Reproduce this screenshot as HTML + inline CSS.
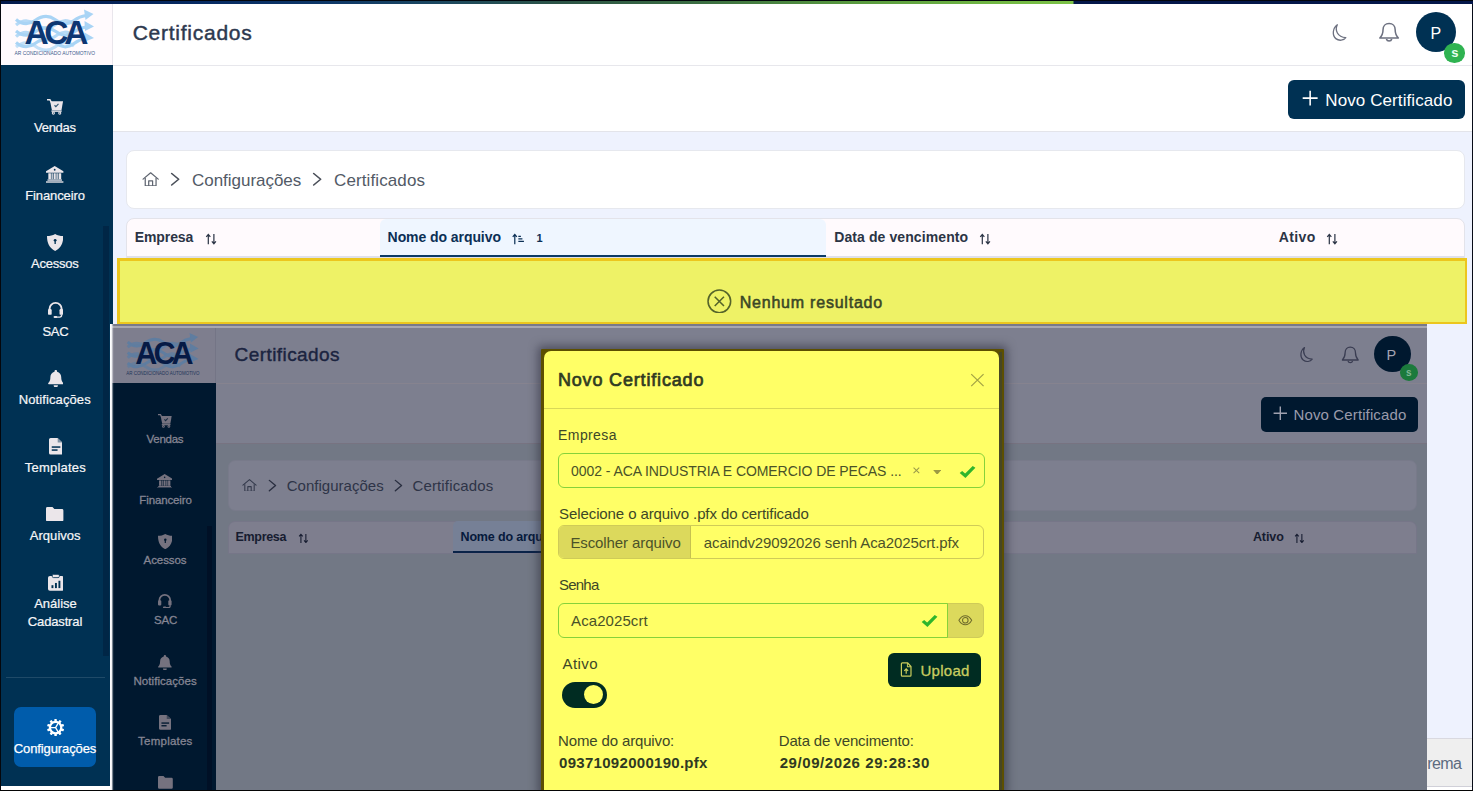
<!DOCTYPE html>
<html lang="pt-BR"><head><meta charset="utf-8"><title>Certificados</title>
<style>html,body{margin:0;padding:0}html{overflow:hidden}body{width:1473px;height:791px;position:relative;overflow:hidden;background:#fff;font-family:"Liberation Sans", sans-serif;}.g{display:contents;margin:0}div,svg,span.t{position:absolute;display:block}.t{white-space:pre;margin:0;padding:0}svg{overflow:hidden}</style></head>
<body>
<header class="g">
<div style="left:113px;top:4px;width:1359px;height:61px;background:#fff;border-bottom:1px solid #e7e7ec;"></div>
<div style="left:113px;top:66px;width:1359px;height:65px;background:#fff;border-bottom:1px solid #e3e4ea;"></div>
<span class="t" id="t0" style="left:132.70px;top:21.60px;font-size:21px;line-height:21px;font-weight:400;color:#2d394f;letter-spacing:0.748px;-webkit-text-stroke:0.45px #2d394f;">Certificados</span>
<svg style="left:1329px;top:21.5px;" width="21" height="21" viewBox="0 0 24 24" preserveAspectRatio="none"><path d="M9.500 3.200C6.500 9 9.500 17.500 19.200 17.800 16.800 21.200 11.500 22 7.800 19 3.500 15.500 4 7 9.500 3.200z" fill="none" stroke="#6d7180" stroke-width="1.500" stroke-linejoin="round"/></svg>
<svg style="left:1376.6px;top:21.0px;" width="24.2" height="23.4" viewBox="0 0 24 24" preserveAspectRatio="none"><path d="M12 2.500c-3.700 0-6 2.800-6 6.300 0 4.200-1 6.400-3.200 8.700h18.400C19 15.200 18 13 18 8.800c0-3.500-2.300-6.300-6-6.300z" fill="none" stroke="#6d7180" stroke-width="1.500" stroke-linejoin="round"/><path d="M9.300 18.500a2.800 2.800 0 0 0 5.400 0" fill="none" stroke="#6d7180" stroke-width="1.500"/></svg>
<div style="left:1415.7px;top:11.8px;width:40.6px;height:40.6px;background:#003153;border-radius:50%;"></div>
<span class="t" id="t1" style="left:1430.50px;top:25.70px;font-size:16px;line-height:16px;font-weight:400;color:#fff;letter-spacing:1.300px;">P</span>
<div style="left:1444.3px;top:43.3px;width:20.6px;height:19.4px;background:#2fb351;border-radius:50%;"></div>
<span class="t" id="t2" style="left:1451.20px;top:46.40px;font-size:13px;line-height:13px;font-weight:700;color:#e8fff0;letter-spacing:0.000px;">s</span>
<div style="left:1288px;top:80px;width:177px;height:39.2px;background:#003153;border-radius:6px;"></div>
<svg style="left:1301.7px;top:90.2px;" width="16.3" height="16.3" viewBox="0 0 24 24" preserveAspectRatio="none"><path d="M12 1v22M1 12h22" fill="none" stroke="#fff" stroke-width="2.3"/></svg>
<span class="t" id="t3" style="left:1325.30px;top:91.60px;font-size:17px;line-height:17px;font-weight:400;color:#fff;letter-spacing:0.093px;">Novo Certificado</span>
</header>
<aside class="g">
<div style="left:1px;top:4px;width:112px;height:61px;background:#fffafd;border-right:1px solid #e9e6ec;box-sizing:border-box;"></div>
<svg style="left:1px;top:4px;" width="112" height="61" viewBox="0 0 112 61" preserveAspectRatio="none"><g fill="none" stroke="#a9d4f5" stroke-width="3.200" stroke-linecap="butt"><path d="M15 15.5c6 5 12 6 19 1s13-6 20-1 12 6 19 1c4-3 8-4.500 12-5" opacity="1"/><path d="M15 27c6 5 12 6 19 1s13-6 20-1 12 6 19 1c4-3 8-4.500 12-5" opacity="1"/><path d="M15 38.5c6 5 12 6 19 1s13-6 20-1 12 6 19 1c4-3 8-4.500 12-5" opacity="1"/><path d="M15 21c6-5 12-6 19-1s13 6 20 1 12-6 19-1" opacity="0.85"/><path d="M15 32.5c6-5 12-6 19-1s13 6 20 1 12-6 19-1" opacity="0.85"/><path d="M15 43c6-5 12-6 19-1s13 6 20 1 12-6 19-1" opacity="0.7"/></g><g fill="#a9d4f5"><path d="M83 5.500l9.500 4.500-8 6z"/><path d="M83.500 17l9.500 5.500-9 4.500z"/><path d="M83.500 28.500l9.500 5.500-10 4z"/></g><text x="53.300" y="39.700" text-anchor="middle" font-family='"Liberation Sans", sans-serif' font-weight="700" font-size="33.500" letter-spacing="-4.300" fill="#0d3672">ACA</text><text x="13.500" y="51.200" font-family='"Liberation Sans", sans-serif' font-weight="400" font-size="5.400" fill="#3b5a8c" textLength="80.500" lengthAdjust="spacingAndGlyphs">AR CONDICIONADO AUTOMOTIVO</text></svg>
<div style="left:1px;top:65px;width:112px;height:721px;background:#003153;"></div>
<div style="left:103px;top:226px;width:6px;height:430px;background:#002646;"></div>
<div style="left:6px;top:677px;width:98.5px;height:1px;background:#1f4a68;"></div>
<svg style="left:46.9px;top:99.0px;" width="16.2" height="15.8" viewBox="0 1 23.700 22.400" preserveAspectRatio="none"><path d="M.8 2h3.400l1.800 3" fill="none" stroke="#ebe6ea" stroke-width="2.200" stroke-linecap="round" stroke-linejoin="round"/><path d="M4.600 4.200h18.900l-2.300 12.600H7.200z" fill="#ebe6ea"/><path d="M11 9.800l2 2 3.800-3.800" fill="none" stroke="#003153" stroke-width="1.700" opacity=".8"/><rect x="6.500" y="17.200" width="15" height="2" fill="#ebe6ea"/><circle cx="9.300" cy="21" r="2.300" fill="#ebe6ea"/><circle cx="18.700" cy="21" r="2.300" fill="#ebe6ea"/><circle cx="9.300" cy="21" r=".8" fill="#003153"/><circle cx="18.700" cy="21" r=".8" fill="#003153"/></svg>
<span class="t" id="t4" style="left:34.00px;top:121.20px;font-size:13px;line-height:13px;font-weight:400;color:#f6f6f8;letter-spacing:-0.275px;-webkit-text-stroke:0.22px #f6f6f8;">Vendas</span>
<svg style="left:46.4px;top:165.9px;" width="17.4" height="16.7" viewBox="0.500 1.200 23 22.100" preserveAspectRatio="none"><path d="M12 1.200L23.500 8.200v2H.5v-2z" fill="#ebe6ea"/><circle cx="12" cy="6.200" r="1.200" fill="#003153"/><rect x="3.600" y="10.800" width="3.400" height="8" fill="#ebe6ea"/><rect x="7.600" y="10.800" width="2.600" height="8" fill="#ebe6ea" opacity=".8"/><rect x="10.800" y="10.800" width="2.600" height="8" fill="#ebe6ea"/><rect x="14" y="10.800" width="2.600" height="8" fill="#ebe6ea" opacity=".8"/><rect x="17.200" y="10.800" width="3.400" height="8" fill="#ebe6ea"/><rect x="2.400" y="19" width="19.200" height="1.700" fill="#ebe6ea"/><rect x=".5" y="21.500" width="23" height="1.800" fill="#ebe6ea"/></svg>
<span class="t" id="t5" style="left:25.20px;top:189.20px;font-size:13px;line-height:13px;font-weight:400;color:#f6f6f8;letter-spacing:-0.107px;-webkit-text-stroke:0.22px #f6f6f8;">Financeiro</span>
<svg style="left:46.9px;top:234.4px;" width="16.3" height="16.9" viewBox="2 1.200 20 21.600" preserveAspectRatio="none"><path d="M12 1.2c3 1.8 6.5 2.6 10 2.6 0 9-2.8 15.5-10 19-7.2-3.500-10-10-10-19 3.500 0 7-.8 10-2.600z" fill="#ebe6ea"/><circle cx="12" cy="9.2" r="1.7" fill="#003153"/><rect x="11.2" y="9.5" width="1.6" height="4.5" fill="#003153"/></svg>
<span class="t" id="t6" style="left:31.00px;top:257.20px;font-size:13px;line-height:13px;font-weight:400;color:#f6f6f8;letter-spacing:-0.222px;-webkit-text-stroke:0.22px #f6f6f8;">Acessos</span>
<svg style="left:47.7px;top:301.7px;" width="15.2" height="16.0" viewBox="2.500 2.300 19 20.900" preserveAspectRatio="none"><path d="M4.500 14V11a7.500 7.500 0 0 1 15 0v3" fill="none" stroke="#ebe6ea" stroke-width="2.400"/><rect x="2.500" y="11.5" width="4.600" height="7.600" rx="1.6" fill="#ebe6ea"/><rect x="16.9" y="11.5" width="4.600" height="7.600" rx="1.6" fill="#ebe6ea"/><path d="M19.5 18.500v1.2a2.300 2.300 0 0 1-2.300 2.300H12" fill="none" stroke="#ebe6ea" stroke-width="1.800"/><rect x="9.500" y="20.6" width="4.500" height="2.600" rx="1.2" fill="#ebe6ea"/></svg>
<span class="t" id="t7" style="left:42.50px;top:325.20px;font-size:13px;line-height:13px;font-weight:400;color:#f6f6f8;letter-spacing:-0.321px;-webkit-text-stroke:0.22px #f6f6f8;">SAC</span>
<svg style="left:47.6px;top:369.8px;" width="15.6" height="17.4" viewBox="2.200 1.200 19.600 22.300" preserveAspectRatio="none"><path d="M12 1.2c.9 0 1.600.7 1.600 1.600v.5c3.200.8 5.200 3.500 5.200 6.900 0 4.300 1.100 6.100 2.600 7.600.5.500.2 1.600-.6 1.600H3.200c-.8 0-1.100-1.100-.6-1.600C4.100 16.300 5.200 14.500 5.200 10.200c0-3.400 2-6.100 5.200-6.900v-.5c0-.9.700-1.600 1.600-1.600z" fill="#ebe6ea"/><path d="M9.300 20.800h5.400a2.700 2.700 0 0 1-5.400 0z" fill="#ebe6ea"/></svg>
<span class="t" id="t8" style="left:18.80px;top:393.20px;font-size:13px;line-height:13px;font-weight:400;color:#f6f6f8;letter-spacing:0.099px;-webkit-text-stroke:0.22px #f6f6f8;">Notificações</span>
<svg style="left:48.5px;top:438.2px;" width="13.7" height="16.6" viewBox="3.500 1 16.500 22" preserveAspectRatio="none"><path d="M5.500 1h8.500l6 6v14a2 2 0 0 1-2 2H5.500a2 2 0 0 1-2-2V3a2 2 0 0 1 2-2z" fill="#ebe6ea"/><path d="M14 1v6h6z" fill="#003153" opacity=".45"/><rect x="6.800" y="12" width="10.400" height="2" fill="#003153"/><rect x="6.800" y="16" width="7" height="2" fill="#003153"/></svg>
<span class="t" id="t9" style="left:24.80px;top:461.20px;font-size:13px;line-height:13px;font-weight:400;color:#f6f6f8;letter-spacing:0.219px;-webkit-text-stroke:0.22px #f6f6f8;">Templates</span>
<svg style="left:46.4px;top:506.6px;" width="17.4" height="14.4" viewBox="1 3 22 18" preserveAspectRatio="none"><path d="M2.800 3h6.400l2.400 2.600h9.600A1.800 1.800 0 0 1 23 7.400V19.200A1.800 1.800 0 0 1 21.200 21H2.800A1.800 1.800 0 0 1 1 19.200V4.800A1.800 1.800 0 0 1 2.800 3z" fill="#ebe6ea"/></svg>
<span class="t" id="t10" style="left:29.80px;top:529.20px;font-size:13px;line-height:13px;font-weight:400;color:#f6f6f8;letter-spacing:0.032px;-webkit-text-stroke:0.22px #f6f6f8;">Arquivos</span>
<svg style="left:47.5px;top:574.0px;" width="15.7" height="16.7" viewBox="3 .3 18 22.700" preserveAspectRatio="none"><rect x="3" y="3" width="18" height="20" rx="2.200" fill="#ebe6ea"/><rect x="8" y=".8" width="8" height="4.400" rx="1.400" fill="#ebe6ea" stroke="#003153" stroke-width="1"/><rect x="7" y="15.500" width="2.200" height="4" fill="#003153"/><rect x="11" y="12.500" width="2.200" height="7" fill="#003153"/><rect x="15" y="9.500" width="2.200" height="10" fill="#003153"/></svg>
<span class="t" id="t11" style="left:34.20px;top:597.20px;font-size:13px;line-height:13px;font-weight:400;color:#f6f6f8;letter-spacing:-0.018px;-webkit-text-stroke:0.22px #f6f6f8;">Análise</span>
<span class="t" id="t12" style="left:27.80px;top:615.40px;font-size:13px;line-height:13px;font-weight:400;color:#f6f6f8;letter-spacing:-0.144px;-webkit-text-stroke:0.22px #f6f6f8;">Cadastral</span>
<div style="left:14.1px;top:706.7px;width:82.3px;height:60px;background:#005cab;border-radius:7px;"></div>
<svg style="left:46.9px;top:719.0px;" width="17.2" height="17.2" viewBox=".8 .8 22.400 22.400" preserveAspectRatio="none"><rect x="10.400" y=".8" width="3.200" height="3.800" rx=".6" fill="#fff" transform="rotate(0 12 12)"/><rect x="10.400" y=".8" width="3.200" height="3.800" rx=".6" fill="#fff" transform="rotate(36 12 12)"/><rect x="10.400" y=".8" width="3.200" height="3.800" rx=".6" fill="#fff" transform="rotate(72 12 12)"/><rect x="10.400" y=".8" width="3.200" height="3.800" rx=".6" fill="#fff" transform="rotate(108 12 12)"/><rect x="10.400" y=".8" width="3.200" height="3.800" rx=".6" fill="#fff" transform="rotate(144 12 12)"/><rect x="10.400" y=".8" width="3.200" height="3.800" rx=".6" fill="#fff" transform="rotate(180 12 12)"/><rect x="10.400" y=".8" width="3.200" height="3.800" rx=".6" fill="#fff" transform="rotate(216 12 12)"/><rect x="10.400" y=".8" width="3.200" height="3.800" rx=".6" fill="#fff" transform="rotate(252 12 12)"/><rect x="10.400" y=".8" width="3.200" height="3.800" rx=".6" fill="#fff" transform="rotate(288 12 12)"/><rect x="10.400" y=".8" width="3.200" height="3.800" rx=".6" fill="#fff" transform="rotate(324 12 12)"/><circle cx="12" cy="12" r="7.400" fill="none" stroke="#fff" stroke-width="2.900"/><path d="M12 12L5.500 8.200M12 12l6.500-3.800M12 12v0M12 12l.0 0M12 12l0 7.500" stroke="#fff" stroke-width="1.700" fill="none" transform="rotate(90 12 12)"/></svg>
<span class="t" id="t13" style="left:13.80px;top:742.40px;font-size:13px;line-height:13px;font-weight:400;color:#fff;letter-spacing:-0.111px;-webkit-text-stroke:0.25px #fff;">Configurações</span>
</aside>
<main class="g">
<div style="left:113px;top:132px;width:1359px;height:658px;background:#eef2fe;"></div>
<div style="left:126px;top:150px;width:1338.5px;height:59px;background:#fff;border:1px solid #e6e8ee;border-radius:8px;box-sizing:border-box;"></div>
<svg style="left:142.0px;top:170.8px;" width="17.3" height="15.6" viewBox="0 0 24 22" preserveAspectRatio="none"><path d="M1.500 11.500L12 2.500l10.500 9" fill="none" stroke="#5f6570" stroke-width="1.700" stroke-linecap="round" stroke-linejoin="round"/><path d="M4.500 9.800V21h15V9.800" fill="none" stroke="#5f6570" stroke-width="1.700" stroke-linejoin="round"/><path d="M9.300 21v-7.200h5.400V21" fill="none" stroke="#5f6570" stroke-width="1.700" stroke-linejoin="round"/></svg>
<svg style="left:169.3px;top:172.3px;" width="12" height="14.6" viewBox="3 0 18 24" preserveAspectRatio="none"><path d="M7 2.500l10.500 9.500L7 21.500" fill="none" stroke="#4a4f59" stroke-width="2.4" stroke-linecap="round" stroke-linejoin="round"/></svg>
<span class="t" id="t14" style="left:192.00px;top:171.70px;font-size:17px;line-height:17px;font-weight:400;color:#525a66;letter-spacing:-0.027px;">Configurações</span>
<svg style="left:311.3px;top:172.3px;" width="12" height="14.6" viewBox="3 0 18 24" preserveAspectRatio="none"><path d="M7 2.500l10.500 9.500L7 21.500" fill="none" stroke="#4a4f59" stroke-width="2.4" stroke-linecap="round" stroke-linejoin="round"/></svg>
<span class="t" id="t15" style="left:334.00px;top:171.70px;font-size:17px;line-height:17px;font-weight:400;color:#525a66;letter-spacing:0.113px;">Certificados</span>
<div style="left:126px;top:218px;width:1338.5px;height:41px;background:#fffafd;border:1px solid #e3e3ea;border-radius:8px 8px 0 0;box-sizing:border-box;"></div>
<div style="left:127px;top:256px;width:1336.5px;height:2px;background:#dfe0ea;"></div>
<div style="left:379.5px;top:219px;width:446px;height:38.3px;background:#eff6ff;border-bottom:2px solid #0b3a66;box-sizing:border-box;border-radius:6px 6px 0 0;"></div>
<span class="t" id="t16" style="left:134.80px;top:230.10px;font-size:14px;line-height:14px;font-weight:700;color:#2b3445;letter-spacing:-0.110px;">Empresa</span>
<svg style="left:205.4px;top:233.0px;" width="12.2" height="12.2" viewBox="0 0 24 24" preserveAspectRatio="none"><path d="M6.500 22V3M2.500 7.500l4-4.700 4 4.700" fill="none" stroke="#2b3445" stroke-width="2.400"/><path d="M17.500 2v19M13.500 16.500l4 4.700 4-4.700" fill="none" stroke="#2b3445" stroke-width="2.400"/></svg>
<span class="t" id="t17" style="left:387.60px;top:230.10px;font-size:14px;line-height:14px;font-weight:700;color:#0b2f55;letter-spacing:-0.071px;">Nome do arquivo</span>
<svg style="left:512.0px;top:233.0px;" width="12.2" height="12.2" viewBox="0 0 24 24" preserveAspectRatio="none"><path d="M5.500 22V3M1.500 7.500l4-4.700 4 4.700" fill="none" stroke="#0b2f55" stroke-width="2.400"/><path d="M12.500 6.500h5M12.500 11.500h8M12.500 16.500h11" fill="none" stroke="#0b2f55" stroke-width="2.600"/></svg>
<span class="t" id="t18" style="left:536.40px;top:233.30px;font-size:11px;line-height:11px;font-weight:700;color:#0b2f55;letter-spacing:-1.600px;">1</span>
<span class="t" id="t19" style="left:834.20px;top:230.10px;font-size:14px;line-height:14px;font-weight:700;color:#2b3445;letter-spacing:0.099px;">Data de vencimento</span>
<svg style="left:979.3px;top:233.0px;" width="12.2" height="12.2" viewBox="0 0 24 24" preserveAspectRatio="none"><path d="M6.500 22V3M2.500 7.500l4-4.700 4 4.700" fill="none" stroke="#2b3445" stroke-width="2.400"/><path d="M17.500 2v19M13.500 16.500l4 4.700 4-4.700" fill="none" stroke="#2b3445" stroke-width="2.400"/></svg>
<span class="t" id="t20" style="left:1278.80px;top:230.10px;font-size:14px;line-height:14px;font-weight:700;color:#2b3445;letter-spacing:0.363px;">Ativo</span>
<svg style="left:1325.8px;top:233.0px;" width="12.2" height="12.2" viewBox="0 0 24 24" preserveAspectRatio="none"><path d="M6.500 22V3M2.500 7.500l4-4.700 4 4.700" fill="none" stroke="#2b3445" stroke-width="2.400"/><path d="M17.500 2v19M13.500 16.500l4 4.700 4-4.700" fill="none" stroke="#2b3445" stroke-width="2.400"/></svg>
<div style="left:117px;top:258.2px;width:1350px;height:66.2px;background:#eef266;border:solid #ecc61e;border-width:3px 2px 2px 3px;box-sizing:border-box;"></div>
<svg style="left:707.4px;top:288.8px;" width="24.7" height="24.7" viewBox="0 0 24 24" preserveAspectRatio="none"><circle cx="12" cy="12" r="11" fill="none" stroke="#55642a" stroke-width="1.500"/><path d="M7.500 7.500l9 9M16.500 7.500l-9 9" fill="none" stroke="#55642a" stroke-width="1.500"/></svg>
<span class="t" id="t21" style="left:739.70px;top:295.00px;font-size:16px;line-height:16px;font-weight:400;color:#3a4726;letter-spacing:0.784px;-webkit-text-stroke:0.55px #3a4726;">Nenhum resultado</span>
<div style="left:1420px;top:738.4px;width:52px;height:48.5px;background:#efefef;border-top:1px solid #d9d9e0;border-bottom:1px solid #d0d0d8;box-sizing:border-box;"></div>
<span class="t" id="t22" style="left:1427.30px;top:755.50px;font-size:16px;line-height:16px;font-weight:400;color:#5d6b80;letter-spacing:-0.618px;">rema</span>
<div style="left:1420px;top:787px;width:52px;height:3px;background:#fff;"></div>
</main>
<figure class="g">
<div style="left:110px;top:324.4px;width:1317.1px;height:465.20000000000005px;background:#727885;"></div>
<div style="left:111.5px;top:324.4px;width:1315.6px;height:1.8px;background:#787a8a;"></div>
<div style="left:111.5px;top:326.0px;width:1315.6px;height:2.1px;background:#a7a7b1;"></div>
<div style="left:216px;top:328px;width:1211.1px;height:55.4px;background:#7d7f8f;border-bottom:1px solid #86838f;"></div>
<div style="left:216px;top:384.4px;width:1211.1px;height:58.6px;background:#7d7f8f;border-bottom:1px solid #777381;"></div>
<div style="left:111.5px;top:328px;width:104.3px;height:55.4px;background:#7e7e8e;border-right:1px solid #747586;box-sizing:border-box;"></div>
<svg style="left:113.5px;top:328px;" width="101.92" height="55.510000000000005" viewBox="0 0 112 61" preserveAspectRatio="none"><g fill="none" stroke="#5f7da0" stroke-width="3.200" stroke-linecap="butt"><path d="M15 15.5c6 5 12 6 19 1s13-6 20-1 12 6 19 1c4-3 8-4.500 12-5" opacity="1"/><path d="M15 27c6 5 12 6 19 1s13-6 20-1 12 6 19 1c4-3 8-4.500 12-5" opacity="1"/><path d="M15 38.5c6 5 12 6 19 1s13-6 20-1 12 6 19 1c4-3 8-4.500 12-5" opacity="1"/><path d="M15 21c6-5 12-6 19-1s13 6 20 1 12-6 19-1" opacity="0.85"/><path d="M15 32.5c6-5 12-6 19-1s13 6 20 1 12-6 19-1" opacity="0.85"/><path d="M15 43c6-5 12-6 19-1s13 6 20 1 12-6 19-1" opacity="0.7"/></g><g fill="#5f7da0"><path d="M83 5.500l9.500 4.500-8 6z"/><path d="M83.500 17l9.500 5.500-9 4.500z"/><path d="M83.500 28.500l9.500 5.500-10 4z"/></g><text x="53.300" y="39.700" text-anchor="middle" font-family='"Liberation Sans", sans-serif' font-weight="700" font-size="33.500" letter-spacing="-4.300" fill="#061a45">ACA</text><text x="13.500" y="51.200" font-family='"Liberation Sans", sans-serif' font-weight="400" font-size="5.400" fill="#23365a" textLength="80.500" lengthAdjust="spacingAndGlyphs">AR CONDICIONADO AUTOMOTIVO</text></svg>
<div style="left:111.5px;top:383.4px;width:104.6px;height:406.20000000000005px;background:#00182f;"></div>
<div style="left:110px;top:324.4px;width:4px;height:465.20000000000005px;background:linear-gradient(90deg,#fdfdff 0,#fdfdff 1.300px,rgba(253,253,255,.55) 2.300px,rgba(253,253,255,0) 3.700px);"></div>
<div style="left:207.3px;top:526.4px;width:5.2px;height:263.20000000000005px;background:#001026;"></div>
<span class="t" id="t23" style="left:234.60px;top:345.20px;font-size:19px;line-height:19px;font-weight:400;color:#1b2440;letter-spacing:0.417px;-webkit-text-stroke:0.4px #1b2440;">Certificados</span>
<svg style="left:1296.5px;top:345.0px;" width="19" height="19" viewBox="0 0 24 24" preserveAspectRatio="none"><path d="M9.500 3.200C6.500 9 9.500 17.500 19.200 17.800 16.800 21.200 11.500 22 7.800 19 3.500 15.500 4 7 9.500 3.200z" fill="none" stroke="#3a3d52" stroke-width="1.500" stroke-linejoin="round"/></svg>
<svg style="left:1339.6px;top:344.6px;" width="20.6" height="20.6" viewBox="0 0 24 24" preserveAspectRatio="none"><path d="M12 2.500c-3.700 0-6 2.800-6 6.300 0 4.200-1 6.400-3.200 8.700h18.400C19 15.200 18 13 18 8.800c0-3.500-2.300-6.300-6-6.300z" fill="none" stroke="#3a3d52" stroke-width="1.500" stroke-linejoin="round"/><path d="M9.300 18.500a2.800 2.800 0 0 0 5.400 0" fill="none" stroke="#3a3d52" stroke-width="1.500"/></svg>
<div style="left:1373.8px;top:336.0px;width:36.8px;height:36.4px;background:#00182f;border-radius:50%;"></div>
<span class="t" id="t24" style="left:1386.60px;top:348.00px;font-size:14.5px;line-height:14.5px;font-weight:400;color:#a3a4b3;letter-spacing:1.300px;">P</span>
<div style="left:1399.7px;top:364.2px;width:18.2px;height:16.6px;background:#1b7a3c;border-radius:50%;"></div>
<span class="t" id="t25" style="left:1406.00px;top:368.30px;font-size:10px;line-height:10px;font-weight:700;color:#7fb795;letter-spacing:-0.400px;">s</span>
<div style="left:1260.8px;top:396.8px;width:157.1px;height:34.8px;background:#00182f;border-radius:5px;"></div>
<svg style="left:1272.8px;top:405.8px;" width="14.6" height="14.6" viewBox="0 0 24 24" preserveAspectRatio="none"><path d="M12 1v22M1 12h22" fill="none" stroke="#a0a1b0" stroke-width="2.3"/></svg>
<span class="t" id="t26" style="left:1293.60px;top:406.80px;font-size:15px;line-height:15px;font-weight:400;color:#9a9bab;letter-spacing:0.117px;">Novo Certificado</span>
<svg style="left:158.2px;top:413.9px;" width="13.8" height="13.9" viewBox="0 1 23.700 22.400" preserveAspectRatio="none"><path d="M.8 2h3.400l1.800 3" fill="none" stroke="#75727f" stroke-width="2.200" stroke-linecap="round" stroke-linejoin="round"/><path d="M4.600 4.200h18.900l-2.300 12.600H7.200z" fill="#75727f"/><path d="M11 9.800l2 2 3.800-3.800" fill="none" stroke="#00182f" stroke-width="1.700" opacity=".8"/><rect x="6.500" y="17.200" width="15" height="2" fill="#75727f"/><circle cx="9.300" cy="21" r="2.300" fill="#75727f"/><circle cx="18.700" cy="21" r="2.300" fill="#75727f"/><circle cx="9.300" cy="21" r=".8" fill="#00182f"/><circle cx="18.700" cy="21" r=".8" fill="#00182f"/></svg>
<span class="t" id="t27" style="left:146.60px;top:434.10px;font-size:11.5px;line-height:11.5px;font-weight:400;color:#858593;letter-spacing:-0.284px;-webkit-text-stroke:0.3px #858593;">Vendas</span>
<svg style="left:157.1px;top:473.5px;" width="15.3" height="14.8" viewBox="0.500 1.200 23 22.100" preserveAspectRatio="none"><path d="M12 1.200L23.500 8.200v2H.5v-2z" fill="#75727f"/><circle cx="12" cy="6.200" r="1.200" fill="#00182f"/><rect x="3.600" y="10.800" width="3.400" height="8" fill="#75727f"/><rect x="7.600" y="10.800" width="2.600" height="8" fill="#75727f" opacity=".8"/><rect x="10.800" y="10.800" width="2.600" height="8" fill="#75727f"/><rect x="14" y="10.800" width="2.600" height="8" fill="#75727f" opacity=".8"/><rect x="17.200" y="10.800" width="3.400" height="8" fill="#75727f"/><rect x="2.400" y="19" width="19.200" height="1.700" fill="#75727f"/><rect x=".5" y="21.500" width="23" height="1.800" fill="#75727f"/></svg>
<span class="t" id="t28" style="left:139.30px;top:494.50px;font-size:11.5px;line-height:11.5px;font-weight:400;color:#858593;letter-spacing:-0.122px;-webkit-text-stroke:0.3px #858593;">Financeiro</span>
<svg style="left:157.6px;top:534.3px;" width="14.6" height="15.2" viewBox="2 1.200 20 21.600" preserveAspectRatio="none"><path d="M12 1.2c3 1.8 6.5 2.6 10 2.6 0 9-2.8 15.5-10 19-7.2-3.500-10-10-10-19 3.500 0 7-.8 10-2.600z" fill="#75727f"/><circle cx="12" cy="9.2" r="1.7" fill="#00182f"/><rect x="11.2" y="9.5" width="1.6" height="4.5" fill="#00182f"/></svg>
<span class="t" id="t29" style="left:143.60px;top:554.90px;font-size:11.5px;line-height:11.5px;font-weight:400;color:#858593;letter-spacing:-0.085px;-webkit-text-stroke:0.3px #858593;">Acessos</span>
<svg style="left:158.4px;top:594.0px;" width="13.6" height="14.4" viewBox="2.500 2.300 19 20.900" preserveAspectRatio="none"><path d="M4.500 14V11a7.500 7.500 0 0 1 15 0v3" fill="none" stroke="#75727f" stroke-width="2.400"/><rect x="2.500" y="11.5" width="4.600" height="7.600" rx="1.6" fill="#75727f"/><rect x="16.9" y="11.5" width="4.600" height="7.600" rx="1.6" fill="#75727f"/><path d="M19.5 18.500v1.2a2.300 2.300 0 0 1-2.300 2.300H12" fill="none" stroke="#75727f" stroke-width="1.800"/><rect x="9.500" y="20.6" width="4.500" height="2.600" rx="1.2" fill="#75727f"/></svg>
<span class="t" id="t30" style="left:153.90px;top:615.30px;font-size:11.5px;line-height:11.5px;font-weight:400;color:#858593;letter-spacing:-0.170px;-webkit-text-stroke:0.3px #858593;">SAC</span>
<svg style="left:158.4px;top:654.5px;" width="13.8" height="15.4" viewBox="2.200 1.200 19.600 22.300" preserveAspectRatio="none"><path d="M12 1.2c.9 0 1.600.7 1.600 1.600v.5c3.200.8 5.200 3.500 5.200 6.900 0 4.300 1.100 6.100 2.600 7.600.5.500.2 1.600-.6 1.600H3.200c-.8 0-1.100-1.100-.6-1.600C4.100 16.300 5.200 14.500 5.200 10.200c0-3.400 2-6.100 5.200-6.900v-.5c0-.9.700-1.600 1.600-1.600z" fill="#75727f"/><path d="M9.300 20.800h5.400a2.700 2.700 0 0 1-5.400 0z" fill="#75727f"/></svg>
<span class="t" id="t31" style="left:133.50px;top:675.70px;font-size:11.5px;line-height:11.5px;font-weight:400;color:#858593;letter-spacing:0.056px;-webkit-text-stroke:0.3px #858593;">Notificações</span>
<svg style="left:159.2px;top:715.4px;" width="12.2" height="14.8" viewBox="3.500 1 16.500 22" preserveAspectRatio="none"><path d="M5.500 1h8.500l6 6v14a2 2 0 0 1-2 2H5.500a2 2 0 0 1-2-2V3a2 2 0 0 1 2-2z" fill="#75727f"/><path d="M14 1v6h6z" fill="#00182f" opacity=".45"/><rect x="6.800" y="12" width="10.400" height="2" fill="#00182f"/><rect x="6.800" y="16" width="7" height="2" fill="#00182f"/></svg>
<span class="t" id="t32" style="left:138.10px;top:736.10px;font-size:11.5px;line-height:11.5px;font-weight:400;color:#858593;letter-spacing:0.230px;-webkit-text-stroke:0.3px #858593;">Templates</span>
<svg style="left:157.8px;top:776.0px;" width="14.8" height="12.8" viewBox="1 3 22 18" preserveAspectRatio="none"><path d="M2.800 3h6.400l2.400 2.600h9.600A1.800 1.800 0 0 1 23 7.400V19.200A1.800 1.800 0 0 1 21.200 21H2.800A1.800 1.800 0 0 1 1 19.200V4.800A1.800 1.800 0 0 1 2.800 3z" fill="#75727f"/></svg>
<div style="left:228px;top:460.2px;width:1189px;height:51px;background:#7d7f8f;border-radius:7px;border:1px solid #787a8a;box-sizing:border-box;"></div>
<svg style="left:242.2px;top:477.6px;" width="15.0" height="13.8" viewBox="0 0 24 22" preserveAspectRatio="none"><path d="M1.500 11.500L12 2.500l10.500 9" fill="none" stroke="#343a4c" stroke-width="1.700" stroke-linecap="round" stroke-linejoin="round"/><path d="M4.500 9.800V21h15V9.800" fill="none" stroke="#343a4c" stroke-width="1.700" stroke-linejoin="round"/><path d="M9.300 21v-7.200h5.400V21" fill="none" stroke="#343a4c" stroke-width="1.700" stroke-linejoin="round"/></svg>
<svg style="left:266.6px;top:478.6px;" width="10.6" height="13.2" viewBox="3 0 18 24" preserveAspectRatio="none"><path d="M7 2.500l10.500 9.500L7 21.500" fill="none" stroke="#2a2f40" stroke-width="2.4" stroke-linecap="round" stroke-linejoin="round"/></svg>
<span class="t" id="t33" style="left:286.70px;top:477.80px;font-size:15px;line-height:15px;font-weight:400;color:#2e3447;letter-spacing:0.023px;">Configurações</span>
<svg style="left:392.7px;top:478.6px;" width="10.6" height="13.2" viewBox="3 0 18 24" preserveAspectRatio="none"><path d="M7 2.500l10.500 9.500L7 21.500" fill="none" stroke="#2a2f40" stroke-width="2.4" stroke-linecap="round" stroke-linejoin="round"/></svg>
<span class="t" id="t34" style="left:412.40px;top:477.80px;font-size:15px;line-height:15px;font-weight:400;color:#2e3447;letter-spacing:0.155px;">Certificados</span>
<div style="left:228px;top:520.5px;width:1189px;height:33px;background:#7e7e8e;border-radius:7px 7px 0 0;border:1px solid #767688;box-sizing:border-box;"></div>
<div style="left:453.2px;top:521.3px;width:320px;height:32px;background:#768096;border-bottom:2px solid #0a2348;box-sizing:border-box;border-radius:5px 5px 0 0;"></div>
<span class="t" id="t35" style="left:235.50px;top:531.00px;font-size:12.5px;line-height:12.5px;font-weight:700;color:#161c30;letter-spacing:-0.309px;">Empresa</span>
<svg style="left:298.0px;top:532.6px;" width="10.8" height="10.8" viewBox="0 0 24 24" preserveAspectRatio="none"><path d="M6.500 22V3M2.500 7.500l4-4.700 4 4.700" fill="none" stroke="#161c30" stroke-width="2.400"/><path d="M17.500 2v19M13.500 16.500l4 4.700 4-4.700" fill="none" stroke="#161c30" stroke-width="2.400"/></svg>
<span class="t" id="t36" style="left:460.50px;top:531.00px;font-size:12.5px;line-height:12.5px;font-weight:700;color:#061a3c;letter-spacing:-0.147px;">Nome do arquivo</span>
<span class="t" id="t37" style="left:1252.90px;top:531.00px;font-size:12.5px;line-height:12.5px;font-weight:700;color:#161c30;letter-spacing:-0.079px;">Ativo</span>
<svg style="left:1294.2px;top:532.6px;" width="10.8" height="10.8" viewBox="0 0 24 24" preserveAspectRatio="none"><path d="M6.500 22V3M2.500 7.500l4-4.700 4 4.700" fill="none" stroke="#161c30" stroke-width="2.400"/><path d="M17.500 2v19M13.500 16.500l4 4.700 4-4.700" fill="none" stroke="#161c30" stroke-width="2.400"/></svg>
<section class="g">
<div style="left:541px;top:349px;width:463.2px;height:445px;background:#5c4f00;box-shadow:0 0 10px 3px rgba(38,38,52,.55);border-radius:1px;"></div>
<div style="left:999px;top:352px;width:2.6px;height:445px;background:#474622;"></div>
<div style="left:544.3px;top:351.4px;width:455px;height:445px;background:#ffff66;border-radius:7px 7px 0 0;"></div>
<span class="t" id="t38" style="left:557.90px;top:371.20px;font-size:18px;line-height:18px;font-weight:400;color:#303b22;letter-spacing:0.830px;-webkit-text-stroke:0.7px #303b22;">Novo Certificado</span>
<svg style="left:969.9px;top:373.0px;" width="14.8" height="14.4" viewBox="0 0 24 24" preserveAspectRatio="none"><path d="M2 2l20 20M22 2L2 22" fill="none" stroke="#a3a344" stroke-width="2.0"/></svg>
<div style="left:544.3px;top:408.3px;width:455px;height:1px;background:#d9d858;"></div>
<span class="t" id="t39" style="left:558.10px;top:427.90px;font-size:14px;line-height:14px;font-weight:400;color:#3d4727;letter-spacing:0.394px;">Empresa</span>
<div style="left:558.4px;top:453.2px;width:426.2px;height:35.2px;border:1px solid #86d23a;border-radius:6px;box-sizing:border-box;"></div>
<span class="t" id="t40" style="left:571.10px;top:463.70px;font-size:14px;line-height:14px;font-weight:400;color:#4a5228;letter-spacing:-0.074px;">0002 - ACA INDUSTRIA E COMERCIO DE PECAS ...</span>
<svg style="left:913.3px;top:467.2px;" width="6.8" height="6.8" viewBox="0 0 24 24" preserveAspectRatio="none"><path d="M2 2l20 20M22 2L2 22" fill="none" stroke="#9a9a4a" stroke-width="3.6"/></svg>
<svg style="left:933.100px;top:469.600px" width="8.400" height="4.800" viewBox="0 0 10 6"><path d="M0 0h10L5 6z" fill="#9c9a44"/></svg>
<svg style="left:959.7px;top:464.6px;overflow:visible;" width="15.0" height="12.6" viewBox="0 0 24 24" preserveAspectRatio="none"><path d="M1.500 13.500l7 7L22.500 3.500" fill="none" stroke="#2fb52c" stroke-width="5.600"/></svg>
<span class="t" id="t41" style="left:559.10px;top:506.20px;font-size:15px;line-height:15px;font-weight:400;color:#3d4727;letter-spacing:-0.098px;">Selecione o arquivo .pfx do certificado</span>
<div style="left:558.4px;top:525.3px;width:425.6px;height:33.4px;border:1px solid #cfcb58;border-radius:6px;box-sizing:border-box;"></div>
<div style="left:558.9px;top:525.8px;width:132.6px;height:32.4px;background:#dcd95c;border-right:1px solid #c6c250;border-radius:5px 0 0 5px;box-sizing:border-box;"></div>
<span class="t" id="t42" style="left:570.40px;top:534.80px;font-size:15px;line-height:15px;font-weight:400;color:#4b5229;letter-spacing:-0.092px;">Escolher arquivo</span>
<span class="t" id="t43" style="left:703.80px;top:534.80px;font-size:15px;line-height:15px;font-weight:400;color:#4b5229;letter-spacing:-0.096px;">acaindv29092026 senh Aca2025crt.pfx</span>
<span class="t" id="t44" style="left:559.10px;top:577.20px;font-size:15px;line-height:15px;font-weight:400;color:#3d4727;letter-spacing:-0.808px;">Senha</span>
<div style="left:947.2px;top:603.2px;width:36.8px;height:35.2px;background:#dcd95c;border:1px solid #cfcb58;border-left:none;border-radius:0 6px 6px 0;box-sizing:border-box;"></div>
<div style="left:558.4px;top:603.2px;width:389.3px;height:35.2px;border:1px solid #86d23a;border-radius:6px 0 0 6px;box-sizing:border-box;"></div>
<span class="t" id="t45" style="left:571.10px;top:613.20px;font-size:15px;line-height:15px;font-weight:400;color:#4a5228;letter-spacing:0.077px;">Aca2025crt</span>
<svg style="left:922.3px;top:614.4px;overflow:visible;" width="15.0" height="12.6" viewBox="0 0 24 24" preserveAspectRatio="none"><path d="M1.500 13.500l7 7L22.500 3.500" fill="none" stroke="#2fb52c" stroke-width="5.600"/></svg>
<svg style="left:958.0px;top:613.4px;" width="14.6" height="14.6" viewBox="0 0 24 24" preserveAspectRatio="none"><path d="M1.500 12C4.500 6.500 8 4.500 12 4.500s7.500 2 10.500 7.500C19.500 17.500 16 19.500 12 19.500S4.500 17.500 1.500 12z" fill="none" stroke="#6e6a2c" stroke-width="1.700"/><circle cx="12" cy="12" r="4.600" fill="none" stroke="#6e6a2c" stroke-width="1.700"/></svg>
<span class="t" id="t46" style="left:562.50px;top:656.20px;font-size:15px;line-height:15px;font-weight:400;color:#3d4727;letter-spacing:0.449px;">Ativo</span>
<div style="left:562.0px;top:681.9px;width:44.6px;height:26.0px;background:#002c22;border-radius:13px;"></div>
<div style="left:584.1px;top:685.3px;width:19.0px;height:19.0px;background:#ffff66;border-radius:50%;"></div>
<div style="left:888.1px;top:652.5px;width:92.5px;height:34.8px;background:#002c22;border-radius:6px;"></div>
<svg style="left:899.4px;top:662.4px;" width="14.4" height="15.2" viewBox="0 0 24 24" preserveAspectRatio="none"><path d="M5.500 1.500h9l5.500 5.500v14a1.500 1.500 0 0 1-1.500 1.500h-13A1.500 1.500 0 0 1 4 21V3a1.500 1.500 0 0 1 1.500-1.500z" fill="none" stroke="#c9cc5c" stroke-width="2"/><path d="M14 1.500V7.500h6" fill="none" stroke="#c9cc5c" stroke-width="1.600"/><path d="M12 18.500v-7M8.800 14l3.200-3.200 3.200 3.200" fill="none" stroke="#c9cc5c" stroke-width="2"/></svg>
<span class="t" id="t47" style="left:920.50px;top:662.70px;font-size:15px;line-height:15px;font-weight:400;color:#c9cd60;letter-spacing:0.262px;-webkit-text-stroke:0.3px #c9cd60;">Upload</span>
<span class="t" id="t48" style="left:558.10px;top:733.20px;font-size:15px;line-height:15px;font-weight:400;color:#3d4727;letter-spacing:-0.149px;">Nome do arquivo:</span>
<span class="t" id="t49" style="left:559.10px;top:754.80px;font-size:15px;line-height:15px;font-weight:700;color:#2f3a22;letter-spacing:0.287px;">09371092000190.pfx</span>
<span class="t" id="t50" style="left:778.70px;top:733.20px;font-size:15px;line-height:15px;font-weight:400;color:#3d4727;letter-spacing:-0.134px;">Data de vencimento:</span>
<span class="t" id="t51" style="left:779.70px;top:754.80px;font-size:15px;line-height:15px;font-weight:700;color:#2f3a22;letter-spacing:0.575px;">29/09/2026 29:28:30</span>
</section>
</figure>
<div style="left:0px;top:0px;width:1473px;height:4.2px;background:linear-gradient(90deg,#03194a 0,#062a62 200px,#0e3868 330px,#1c4860 440px,#2c5446 560px,#3b6e42 700px,#58993f 850px,#72b844 1000px,#7cc247 1073px,#04174a 1074px,#04174a 100%);"></div>
<div style="left:0px;top:0px;width:1473px;height:1px;background:#03060c;"></div>
<div style="left:0px;top:0px;width:1px;height:791px;background:#05070c;"></div>
<div style="left:1472px;top:4px;width:1px;height:791px;background:#080c18;"></div>
<div style="left:1px;top:786px;width:109px;height:4px;background:#fff;"></div>
<div style="left:0px;top:789.6px;width:1473px;height:1.4px;background:#050505;"></div>
</body></html>
